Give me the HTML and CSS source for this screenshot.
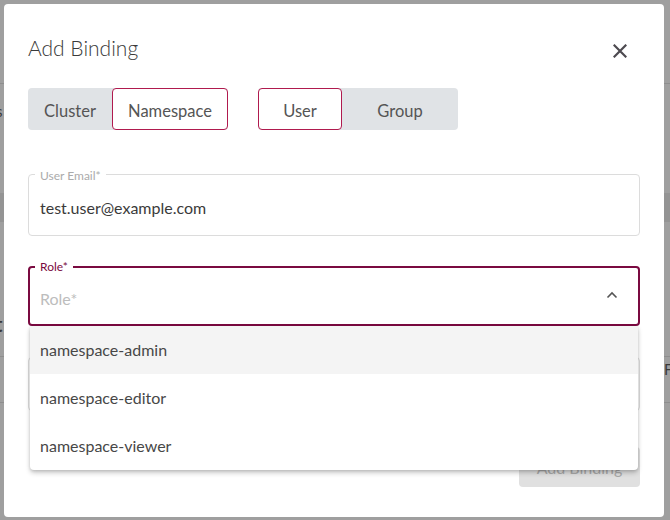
FILE: index.html
```html
<!DOCTYPE html>
<html>
<head>
<meta charset="utf-8">
<link rel="stylesheet" href="styles.css">
</head>
<body>
<div class="backdrop">
  <div class="bg-line l1"></div>
  <div class="bg-text t1">s</div>
  <div class="bg-band"></div>
  <div class="bg-text t2">t</div>
  <div class="bg-line l2"></div>
  <div class="bg-text t3">F</div>
  <div class="bg-line l3"></div>
</div>
<div class="dialog">
  <div class="dlg-head">
    <h2 class="title">Add Binding</h2>
    <button class="close" aria-label="close">
      <svg width="14" height="14" viewBox="0 0 14 14"><path d="M1.5 1.5L12.5 12.5M12.5 1.5L1.5 12.5" stroke="#4d4a50" stroke-width="2.2" stroke-linecap="square" fill="none"/></svg>
    </button>
  </div>
  <div class="toggles">
    <div class="seg">
      <span class="opt w84">Cluster</span>
      <span class="opt w116 active">Namespace</span>
    </div>
    <div class="seg">
      <span class="opt w84 active">User</span>
      <span class="opt w116">Group</span>
    </div>
  </div>
  <div class="field email">
    <span class="legend">User Email*</span>
    <div class="value">test.user@example.com</div>
  </div>
  <div class="field role">
    <span class="legend">Role*</span>
    <div class="placeholder">Role*</div>
    <svg class="chev" width="12" height="8" viewBox="0 0 12 8"><path d="M1.5 6.5L6 2L10.5 6.5" stroke="#555" stroke-width="1.6" fill="none"/></svg>
    <ul class="menu">
      <li class="hover">namespace-admin</li>
      <li>namespace-editor</li>
      <li>namespace-viewer</li>
    </ul>
  </div>
  <div class="hidden-field"></div>
  <div class="actions">
    <button class="submit" disabled>Add Binding</button>
  </div>
</div>
</body>
</html>
```

FILE: styles.css
```css
* { box-sizing: border-box; }
html, body { margin: 0; padding: 0; }
body {
  width: 670px;
  height: 520px;
  background: #9f9f9f;
  font-family: Lato, "Noto Sans", sans-serif;
  position: relative;
  overflow: hidden;
}
.backdrop { position: absolute; inset: 0; }
.bg-line { position: absolute; left: 0; right: 0; height: 1px; background: #8e8e8e; }
.l1 { top: 83px; }
.l2 { top: 356px; }
.l3 { top: 402px; }
.bg-band { position: absolute; left: 0; right: 0; top: 193px; height: 29px; background: #949494; }
.bg-text { position: absolute; font-size: 15px; color: #3a3a3a; }
.t1 { left: -4px; top: 102px; }
.t2 { left: -5px; top: 312px; font-size: 20px; font-weight: 700; }
.t3 { left: 664px; top: 360px; }

.dialog {
  position: relative;
  margin: 4px 0 0 4px;
  width: 660px;
  height: 513px;
  background: #fff;
  border-radius: 4px;
  padding: 0 24px;
  display: flex;
  flex-direction: column;
}
.dlg-head {
  display: flex;
  align-items: center;
  justify-content: space-between;
  padding-top: 29px;
  height: 59px;
}
.title {
  margin: 0;
  font-size: 21px;
  line-height: 30px;
  font-weight: 300;
  color: #3a3a3a;
}
.close {
  border: 0;
  background: none;
  padding: 0;
  width: 14px;
  height: 14px;
  margin-right: 13px;
  margin-top: 6px;
  display: flex;
}
.toggles {
  display: flex;
  gap: 30px;
  margin-top: 25px;
}
.seg {
  display: flex;
  height: 42px;
  background: #e0e3e6;
  border-radius: 4px;
}
.opt {
  display: flex;
  align-items: center;
  justify-content: center;
  padding-top: 4px;
  font-size: 16.5px;
  color: #555;
  border-radius: 4px;
}
.w84 { width: 84px; }
.w116 { width: 116px; }
.opt.active {
  background: #fff;
  border: 1px solid #b01a4e;
}
.field {
  position: relative;
  border-radius: 4px;
}
.email {
  margin-top: 44px;
  height: 62px;
  border: 1px solid #dcdcdc;
  padding: 0 11px;
  display: flex;
  align-items: center;
}
.legend {
  position: absolute;
  top: -6px;
  left: 6px;
  padding: 0 5px;
  background: #fff;
  font-size: 12px;
  line-height: 14px;
  color: #ababab;
}
.value {
  font-size: 16px;
  color: #3a3a3a;
  padding-top: 5px;
}
.role {
  margin-top: 30px;
  height: 60px;
  border: 2px solid #7a0a40;
  padding: 0 10px;
  display: flex;
  align-items: center;
  justify-content: space-between;
}
.role .legend {
  top: -8px;
  left: 5px;
  color: #7a0a40;
}
.placeholder {
  font-size: 16px;
  color: #bdbdbd;
  padding-top: 5px;
}
.chev { margin-right: 10px; margin-top: -3px; }
.menu {
  position: absolute;
  top: calc(100% + 2px);
  left: 0;
  right: 0;
  margin: 0;
  padding: 0;
  list-style: none;
  background: #fff;
  border-radius: 0 0 4px 4px;
  box-shadow: 0 3px 5px rgba(0,0,0,0.2), 0 1px 3px rgba(0,0,0,0.12);
  z-index: 2;
}
.menu li {
  height: 48px;
  display: flex;
  align-items: center;
  padding-left: 10px;
  padding-bottom: 2px;
  font-size: 16px;
  color: #474747;
}
.menu li.hover { background: #f4f4f4; }
.hidden-field {
  margin-top: 31px;
  height: 54px;
  border: 1px solid #dcdcdc;
  border-radius: 4px;
}
.actions {
  display: flex;
  justify-content: flex-end;
  margin-top: 36px;
}
.submit {
  width: 121px;
  height: 40px;
  border: 0;
  border-radius: 4px;
  background: #e0e0e0;
  color: #a9a9a9;
  font-family: inherit;
  font-size: 16px;
}
```
